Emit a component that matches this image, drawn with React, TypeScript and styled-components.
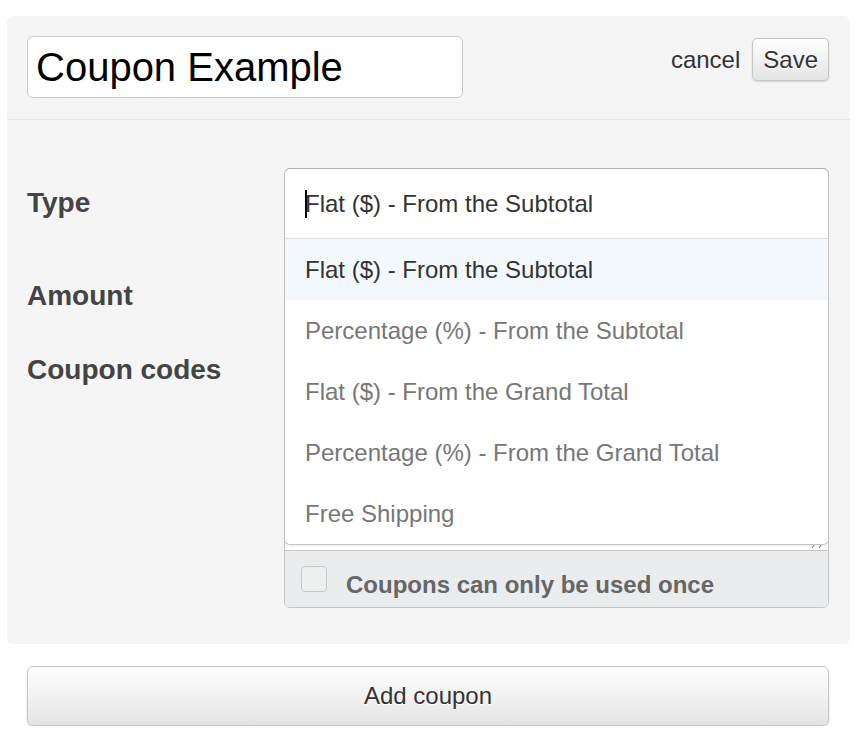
import { ReactElement } from 'react'
import styled, { createGlobalStyle } from 'styled-components'

const GlobalStyle = createGlobalStyle`
  html, body {
    margin: 0;
    padding: 0;
    background: #fff;
  }
  body {
    font-family: 'Liberation Sans', Arial, Helvetica, sans-serif;
    color: #333;
  }
`

const SPage = styled.div`
  padding: 16px 8px 0 7px;
`

const SPanel = styled.div`
  background: #f5f5f5;
  border-radius: 6px;
  padding-bottom: 36px;
`

const SHeader = styled.div`
  display: flex;
  align-items: flex-start;
  justify-content: space-between;
  padding: 20px 21px 21px 20px;
  border-bottom: 1px solid #e4e4e4;
`

const STitleInput = styled.div`
  box-sizing: border-box;
  width: 436px;
  height: 62px;
  padding: 0 8px;
  display: flex;
  align-items: center;
  background: #fff;
  border: 1px solid #c8c8c8;
  border-radius: 6px;
  font-size: 40px;
  color: #000;
`

const SActions = styled.div`
  display: flex;
  align-items: center;
  gap: 12px;
  padding-top: 2px;
`

const SCancel = styled.span`
  font-size: 24px;
  color: #333;
`

const SButton = styled.div<{ wide?: boolean }>`
  box-sizing: border-box;
  display: flex;
  align-items: center;
  justify-content: center;
  height: ${({ wide }): string => (wide ? '60px' : '43px')};
  padding: 0 10px;
  font-size: 24px;
  color: #333;
  background: linear-gradient(#ffffff, #e4e4e4);
  border: 1px solid #c6c6c6;
  border-radius: ${({ wide }): string => (wide ? '6px' : '5px')};
  box-shadow: 0 1px 2px rgba(0, 0, 0, 0.15);
  text-shadow: 0 1px 0 #fff;
`

const SBody = styled.div`
  display: flex;
  flex-direction: column;
  gap: 23px;
  padding: 48px 21px 0 20px;
`

interface IRowProps {
  $top?: boolean
}

const SRow = styled.div<IRowProps>`
  display: flex;
  align-items: ${({ $top }): string => ($top ? 'flex-start' : 'center')};
`

const SLabel = styled.div`
  width: 257px;
  flex-shrink: 0;
  font-size: 28px;
  font-weight: 700;
  line-height: 32px;
  color: #444;
`

const SField = styled.div`
  position: relative;
  flex: 1;
`

const SSelect = styled.div`
  box-sizing: border-box;
  height: 70px;
  display: flex;
  align-items: center;
  padding-left: 21px;
  background: #fff;
  border: 1px solid #c6c6c6;
  border-radius: 6px;
  font-size: 24px;
  color: #333;
`

const SCaret = styled.span`
  display: inline-block;
  width: 2px;
  height: 28px;
  margin-right: -2px;
  background: #000;
`

const SDropdown = styled.div`
  position: absolute;
  top: 0;
  left: 0;
  right: 0;
  z-index: 2;
  background: #fff;
  border: 1px solid #c4c4c4;
  border-top-color: #b0b0b0;
  border-radius: 6px;
  box-shadow: 0 1px 2px rgba(0, 0, 0, 0.08);
  overflow: hidden;
`

const SCurrent = styled.div`
  height: 69px;
  display: flex;
  align-items: center;
  padding-left: 20px;
  font-size: 24px;
  color: #333;
  border-bottom: 1px solid #e2e2e2;
`

const SOption = styled.div<{ active?: boolean }>`
  height: 61px;
  display: flex;
  align-items: center;
  padding-left: 20px;
  font-size: 24px;
  color: ${({ active }): string => (active ? '#333' : '#777')};
  background: ${({ active }): string => (active ? '#f3f8fc' : '#fff')};
`

const SInput = styled.div`
  box-sizing: border-box;
  height: 70px;
  background: #fff;
  border: 1px solid #c6c6c6;
  border-radius: 6px;
`

const SCodes = styled.div`
  border: 1px solid #c6c6c6;
  border-radius: 6px;
  overflow: hidden;
`

const STextarea = styled.div`
  position: relative;
  height: 195px;
  background: #fff;
  border-bottom: 1px solid #c6c6c6;
`

const SGrip = styled.svg`
  position: absolute;
  right: 5px;
  bottom: 1px;
`

const SFooter = styled.label`
  display: flex;
  align-items: center;
  gap: 19px;
  height: 56px;
  padding-left: 16px;
  background: #ebecee;
  font-size: 24px;
  font-weight: 700;
  color: #666;
`

const SCheckbox = styled.span`
  box-sizing: border-box;
  width: 26px;
  height: 26px;
  background: #eef0ef;
  border: 1px solid #c8c8c8;
  border-radius: 4px;
`

const SFooterText = styled.span`
  margin-top: 11px;
`

const SBottom = styled.div`
  padding: 22px 21px 0 20px;
`

const couponTypes = [
  'Flat ($) - From the Subtotal',
  'Percentage (%) - From the Subtotal',
  'Flat ($) - From the Grand Total',
  'Percentage (%) - From the Grand Total',
  'Free Shipping',
]

function App(): ReactElement {
  const selected = couponTypes[0]

  return (
    <>
      <GlobalStyle />
      <SPage>
        <SPanel>
          <SHeader>
            <STitleInput>Coupon Example</STitleInput>
            <SActions>
              <SCancel>cancel</SCancel>
              <SButton>Save</SButton>
            </SActions>
          </SHeader>
          <SBody>
            <SRow>
              <SLabel>Type</SLabel>
              <SField>
                <SSelect>{selected}</SSelect>
                <SDropdown>
                  <SCurrent>
                    <SCaret />
                    {selected}
                  </SCurrent>
                  {couponTypes.map((type) => (
                    <SOption key={type} active={type === selected}>
                      {type}
                    </SOption>
                  ))}
                </SDropdown>
              </SField>
            </SRow>
            <SRow>
              <SLabel>Amount</SLabel>
              <SField>
                <SInput />
              </SField>
            </SRow>
            <SRow $top>
              <SLabel>Coupon codes</SLabel>
              <SField>
                <SCodes>
                  <STextarea>
                    <SGrip width="12" height="6" viewBox="0 0 12 6">
                      <path d="M1 5 L3 2 M8 5 L10 2" stroke="#777" strokeWidth="1" fill="none" />
                    </SGrip>
                  </STextarea>
                  <SFooter>
                    <SCheckbox />
                    <SFooterText>Coupons can only be used once</SFooterText>
                  </SFooter>
                </SCodes>
              </SField>
            </SRow>
          </SBody>
        </SPanel>
        <SBottom>
          <SButton wide>Add coupon</SButton>
        </SBottom>
      </SPage>
    </>
  )
}

export default App
